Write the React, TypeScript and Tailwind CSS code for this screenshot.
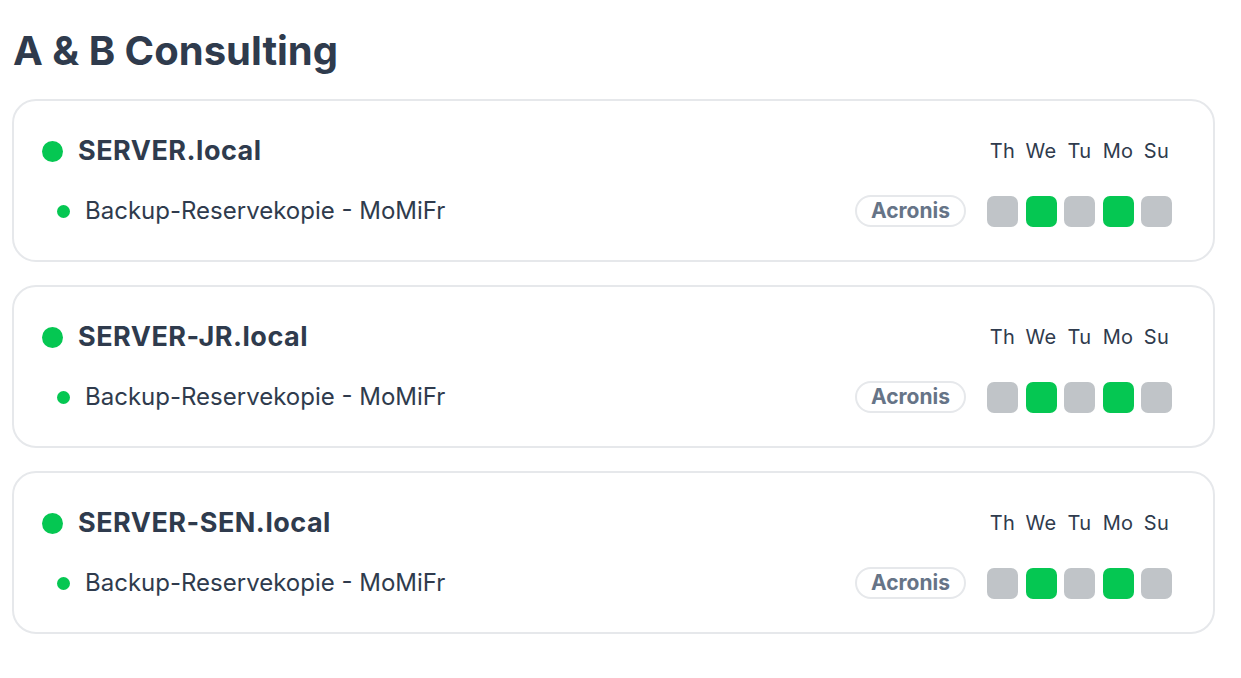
import React from 'react';

type Job = {
  name: string;
  vendor: string;
  days: boolean[];
};

type Server = {
  host: string;
  jobs: Job[];
};

const dayLabels: string[] = ['Th', 'We', 'Tu', 'Mo', 'Su'];

const servers: Server[] = [
  {
    host: 'SERVER.local',
    jobs: [{ name: 'Backup-Reservekopie - MoMiFr', vendor: 'Acronis', days: [false, true, false, true, false] }],
  },
  {
    host: 'SERVER-JR.local',
    jobs: [{ name: 'Backup-Reservekopie - MoMiFr', vendor: 'Acronis', days: [false, true, false, true, false] }],
  },
  {
    host: 'SERVER-SEN.local',
    jobs: [{ name: 'Backup-Reservekopie - MoMiFr', vendor: 'Acronis', days: [false, true, false, true, false] }],
  },
];

const ServerCard: React.FC<{ server: Server }> = ({ server }) => {
  return (
    <div className="rounded-[24px] border-2 border-[#e6e8eb] bg-white pl-[28px] pr-[41px] pt-[34px] pb-[33px]">
      {/* Host row */}
      <div className="flex h-[32px] items-center">
        <span className="h-[21px] w-[21px] shrink-0 rounded-full bg-[#05c752]" />
        <span className="ml-[15px] text-[27px] font-bold tracking-[0.5px] text-[#2f3b4d]">{server.host}</span>
        <div className="ml-auto flex gap-[7.5px]">
          {dayLabels.map((d) => (
            <span key={d} className="w-[31px] text-center text-[20px] tracking-[0.3px] text-[#2f3b4d]">
              {d}
            </span>
          ))}
        </div>
      </div>

      {/* Jobs */}
      {server.jobs.map((job) => (
        <div key={job.name} className="mt-[28px] flex h-[32px] items-center">
          <span className="ml-[15px] h-[13px] w-[13px] shrink-0 rounded-full bg-[#05c752]" />
          <span className="ml-[15px] text-[24px] text-[#2f3b4d]">{job.name}</span>
          <span className="ml-auto flex h-[32px] items-center rounded-full border-2 border-[#e6e8eb] px-[14px] text-[21px] font-bold text-[#667487]">
            {job.vendor}
          </span>
          <div className="ml-[21px] flex gap-[7.5px]">
            {job.days.map((ok, i) => (
              <span
                key={i}
                className={ok ? 'h-[31px] w-[31px] rounded-[7px] bg-[#05c752]' : 'h-[31px] w-[31px] rounded-[7px] bg-[#c0c4c8]'}
              />
            ))}
          </div>
        </div>
      ))}
    </div>
  );
};

const App: React.FC = () => {
  return (
    <div className="min-h-screen bg-white px-[12px] pt-[27px] font-['Inter',sans-serif]">
      <h1 className="ml-[1px] text-[40px] font-bold leading-[48px] text-[#2f3b4d]">A &amp; B Consulting</h1>
      <div className="mt-[24px] flex w-[1203px] flex-col gap-[23px]">
        {servers.map((s) => (
          <ServerCard key={s.host} server={s} />
        ))}
      </div>
    </div>
  );
};

export default App;
